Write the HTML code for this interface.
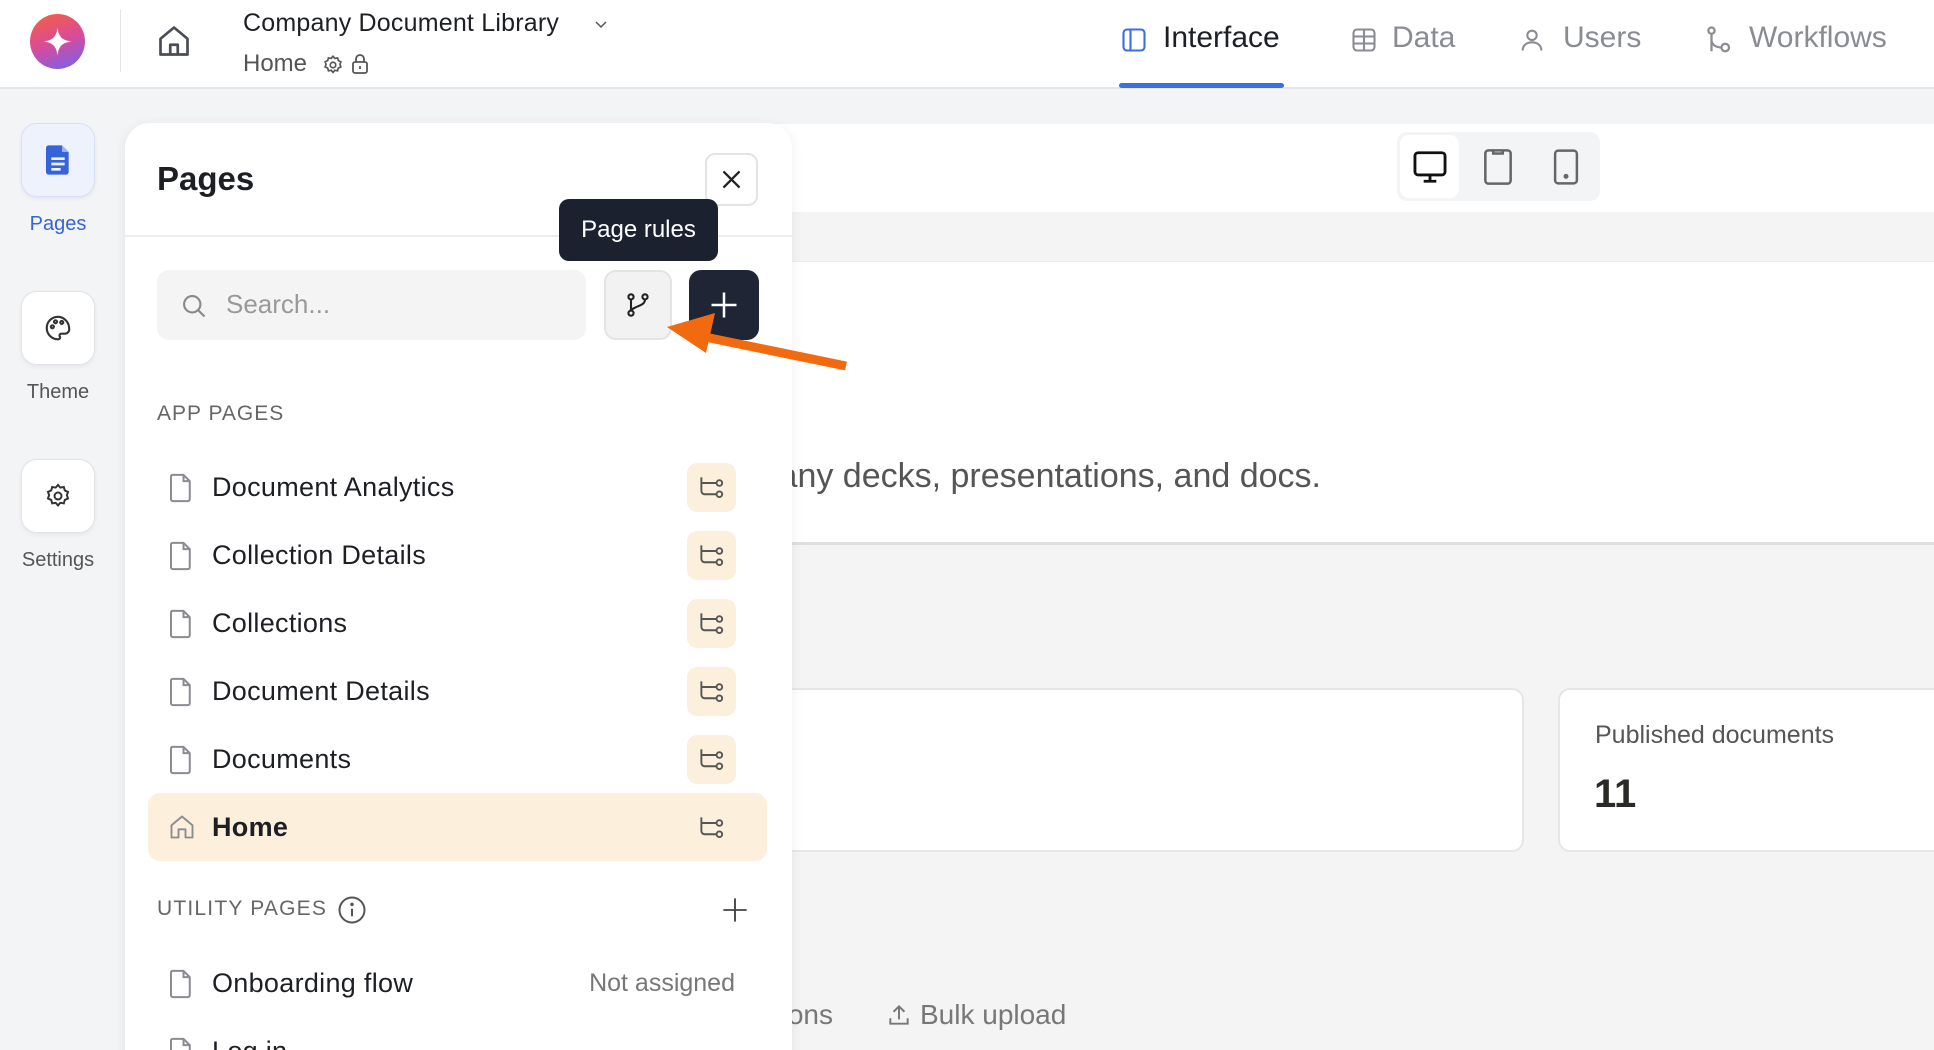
<!DOCTYPE html>
<html style="width:1934px;height:1050px;overflow:hidden"><head><meta charset="utf-8"><style>
*{box-sizing:border-box;margin:0;padding:0}
body{width:1934px;height:1050px;overflow:hidden;background:#f4f4f4;font-family:"Liberation Sans",sans-serif;position:relative;color:#1d1f24}
.a{position:absolute}
.t{position:absolute;white-space:nowrap}
svg{display:block}
.row{position:absolute;left:148px;width:619px;height:68px}
.row .ic{position:absolute;left:20px;top:20px}
.row .lb{position:absolute;left:64px;top:0;line-height:68px;font-size:27px;letter-spacing:0.3px;color:#1d1f24}
.row .bd{position:absolute;left:539px;top:10px;width:49px;height:49px;border-radius:10px;background:#fcefdc}
.row .bd svg{position:absolute;left:11px;top:11px}
.sb{position:absolute;left:21px;width:74px;height:74px;border-radius:16px;background:#fff;border:1px solid #e3e4e8;box-shadow:0 2px 4px rgba(0,0,0,.06)}
.sl{position:absolute;left:0;width:116px;text-align:center;font-size:20px;color:#555}
</style></head><body>
<!-- header -->
<div class="a" style="left:0;top:0;width:1934px;height:89px;background:#fff;border-bottom:2px solid #e6e7ea"></div>
<div class="a" style="left:30px;top:14px;width:55px;height:55px;border-radius:50%;background:linear-gradient(160deg,#f7613a 0%,#d94b9a 50%,#6c63f5 100%)"></div>
<svg class="a" style="left:39px;top:23px" width="37" height="37" viewBox="0 0 24 24"><path d="M12 3C12.8 9 15 11.2 21 12 15 12.8 12.8 15 12 21 11.2 15 9 12.8 3 12 9 11.2 11.2 9 12 3Z" fill="#fff"/></svg>
<div class="a" style="left:120px;top:10px;width:1px;height:62px;background:#e3e4e8"></div>
<svg class="a" style="left:156px;top:22px" width="36" height="38" viewBox="0 0 24 24" fill="none" stroke="#4a4d55" stroke-width="1.8" stroke-linejoin="round"><path d="M3 10.5 12 3l9 7.5V21H3Z"/><path d="M9.5 21v-6.5h5V21"/></svg>
<div class="t" style="left:243px;top:9px;font-size:25px;letter-spacing:0.2px;font-weight:500;color:#1d1f24">Company Document Library</div>
<svg class="a" style="left:593px;top:18px" width="16" height="14" viewBox="0 0 16 14" fill="none" stroke="#555" stroke-width="1.5"><path d="M3 4l5 5 5-5"/></svg>
<div class="t" style="left:243px;top:50px;font-size:24px;color:#555">Home</div>
<svg class="a" style="left:322px;top:54px" width="22" height="22" viewBox="0 0 24 24" fill="none" stroke="#555" stroke-width="1.8"><circle cx="12" cy="12" r="3"/><path d="M12 2.5l2 2.3 3-.5.8 2.9 2.8 1.3-1 2.8 1 2.8-2.8 1.3-.8 2.9-3-.5-2 2.3-2-2.3-3 .5-.8-2.9-2.8-1.3 1-2.8-1-2.8 2.8-1.3.8-2.9 3 .5Z"/></svg>
<svg class="a" style="left:350px;top:53px" width="20" height="22" viewBox="0 0 20 22" fill="none" stroke="#555" stroke-width="1.8"><rect x="3" y="9" width="14" height="11" rx="2"/><path d="M6 9V6a4 4 0 0 1 8 0v3M10 13v3"/></svg>
<!-- tabs -->
<svg class="a" style="left:1120px;top:26px" width="28" height="28" viewBox="0 0 24 24" fill="none" stroke="#3b6fe0" stroke-width="1.8"><rect x="3" y="3" width="18" height="18" rx="3"/><path d="M9 3v18"/></svg>
<div class="t" style="left:1163px;top:21px;font-size:30px;font-weight:500;color:#1d1f24">Interface</div>
<div class="a" style="left:1119px;top:83px;width:165px;height:5px;border-radius:3px;background:#3b6fe0"></div>
<svg class="a" style="left:1350px;top:26px" width="28" height="28" viewBox="0 0 24 24" fill="none" stroke="#8a8c92" stroke-width="1.8"><rect x="3" y="3" width="18" height="18" rx="3"/><path d="M3 9h18M3 15h18M12 3v18"/></svg>
<div class="t" style="left:1392px;top:21px;font-size:30px;color:#8a8c92">Data</div>
<svg class="a" style="left:1518px;top:25px" width="28" height="30" viewBox="0 0 24 24" fill="none" stroke="#8a8c92" stroke-width="1.8"><circle cx="12" cy="8" r="4"/><path d="M4 21c0-4.5 3.5-7 8-7s8 2.5 8 7"/></svg>
<div class="t" style="left:1563px;top:21px;font-size:30px;color:#8a8c92">Users</div>
<svg class="a" style="left:1704px;top:24px" width="30" height="32" viewBox="0 0 24 24" fill="none" stroke="#8a8c92" stroke-width="1.8"><circle cx="6" cy="4.5" r="2.5"/><circle cx="17" cy="18" r="3"/><path d="M6 7v14M6 12c0 4 4 6 8 6"/></svg>
<div class="t" style="left:1749px;top:21px;font-size:30px;color:#8a8c92">Workflows</div>
<!-- grey band + left sidebar -->
<div class="a" style="left:0;top:91px;width:1934px;height:33px;background:#f3f4f6"></div>
<div class="a" style="left:0;top:91px;width:160px;height:959px;background:#f3f4f6"></div>
<div class="sb" style="top:123px;background:#eef2fd;border-color:#d7e0f7"></div>
<svg class="a" style="left:44px;top:144px" width="28" height="32" viewBox="0 0 20 24"><path d="M3 1h10l5 5v15a2 2 0 0 1-2 2H3a2 2 0 0 1-2-2V3a2 2 0 0 1 2-2Z" fill="#3763d8"/><path d="M5 11h10M5 15h10M5 19h7" stroke="#eef2fd" stroke-width="2"/><path d="M13 1v5h5" fill="#9db3ee"/></svg>
<div class="sl" style="top:213px;color:#3763d8">Pages</div>
<div class="sb" style="top:291px"></div>
<svg class="a" style="left:43px;top:313px" width="30" height="30" viewBox="0 0 24 24" fill="none" stroke="#333" stroke-width="1.7"><path d="M12 3a9 9 0 1 0 0 18c1.5 0 2-1 1.5-2s-.5-2.5 1.5-2.5h2.5A3.5 3.5 0 0 0 21 13c0-5.5-4-10-9-10Z"/><circle cx="7.5" cy="11" r="1.2"/><circle cx="10" cy="7" r="1.2"/><circle cx="15" cy="7.5" r="1.2"/></svg>
<div class="sl" style="top:381px">Theme</div>
<div class="sb" style="top:459px"></div>
<svg class="a" style="left:44px;top:482px" width="28" height="28" viewBox="0 0 24 24" fill="none" stroke="#333" stroke-width="1.7"><circle cx="12" cy="12" r="3"/><path d="M12 2.5l2 2.3 3-.5.8 2.9 2.8 1.3-1 2.8 1 2.8-2.8 1.3-.8 2.9-3-.5-2 2.3-2-2.3-3 .5-.8-2.9-2.8-1.3 1-2.8-1-2.8 2.8-1.3.8-2.9 3 .5Z"/></svg>
<div class="sl" style="top:549px">Settings</div>
<!-- main canvas -->
<div class="a" style="left:160px;top:124px;width:1774px;height:88px;background:#fff"></div>
<div class="a" style="left:1397px;top:132px;width:203px;height:69px;border-radius:10px;background:#f3f4f6"></div>
<div class="a" style="left:1400px;top:135px;width:59px;height:63px;border-radius:9px;background:#fff"></div>
<svg class="a" style="left:1411px;top:148px" width="38" height="38" viewBox="0 0 24 24" fill="none" stroke="#111" stroke-width="1.8"><rect x="2.5" y="3" width="19" height="14" rx="2"/><path d="M12 17v4M8 21h8"/></svg>
<svg class="a" style="left:1482px;top:148px" width="32" height="38" viewBox="0 0 20 24" fill="none" stroke="#666" stroke-width="1.6"><rect x="2" y="1.5" width="16" height="21" rx="2"/><path d="M7 1.5v2h6v-2"/></svg>
<svg class="a" style="left:1552px;top:148px" width="28" height="38" viewBox="0 0 18 24" fill="none" stroke="#666" stroke-width="1.6"><rect x="2" y="1.5" width="14" height="21" rx="2"/><circle cx="9" cy="18" r=".8" fill="#666"/></svg>
<div class="a" style="left:160px;top:261px;width:1774px;height:284px;background:#fff;border-bottom:3px solid #dedfe2;border-top:1px solid #ececec"></div>
<div class="t" style="left:200px;top:457px;width:1121px;text-align:right;font-size:34px;color:#555">Browse all company decks, presentations, and docs.</div>
<div class="a" style="left:400px;top:688px;width:1124px;height:164px;background:#fff;border:2px solid #e6e6e6;border-radius:12px"></div>
<div class="a" style="left:1558px;top:688px;width:420px;height:164px;background:#fff;border:2px solid #e6e6e6;border-radius:12px"></div>
<div class="t" style="left:1595px;top:721px;font-size:25px;color:#555">Published documents</div>
<div class="t" style="left:1594px;top:772px;font-size:40px;font-weight:bold;color:#2a2a26">11</div>
<div class="t" style="left:600px;top:999px;width:233px;text-align:right;font-size:28px;color:#777">Actions</div>
<svg class="a" style="left:886px;top:1001px" width="26" height="28" viewBox="0 0 24 24" fill="none" stroke="#777" stroke-width="1.8"><path d="M12 16V4M7 9l5-5 5 5M4 15v5h16v-5"/></svg>
<div class="t" style="left:920px;top:999px;font-size:28px;color:#777">Bulk upload</div>
<!-- pages panel -->
<div class="a" style="left:125px;top:123px;width:667px;height:960px;background:#fff;border-radius:25px;box-shadow:0 2px 12px rgba(0,0,0,.07)"></div>
<div class="t" style="left:157px;top:160px;font-size:33px;font-weight:bold;color:#1d1f24">Pages</div>
<div class="a" style="left:705px;top:153px;width:53px;height:53px;border-radius:10px;border:2px solid #e3e4e8;background:#fff"></div>
<svg class="a" style="left:720px;top:168px" width="23" height="23" viewBox="0 0 20 20" stroke="#222" stroke-width="2"><path d="M3 3l14 14M17 3 3 17"/></svg>
<div class="a" style="left:125px;top:235px;width:667px;height:2px;background:#ececee"></div>
<div class="a" style="left:157px;top:270px;width:429px;height:70px;border-radius:12px;background:#f4f4f5"></div>
<svg class="a" style="left:180px;top:292px" width="28" height="28" viewBox="0 0 24 24" fill="none" stroke="#888" stroke-width="1.8"><circle cx="10.5" cy="10.5" r="7"/><path d="M15.5 15.5 21 21"/></svg>
<div class="t" style="left:226px;top:289px;font-size:26px;color:#999">Search...</div>
<div class="a" style="left:604px;top:270px;width:68px;height:70px;border-radius:12px;background:#f2f2f2;border:2px solid #e4e4e4"></div>
<svg class="a" style="left:624px;top:291px" width="28" height="28" viewBox="0 0 24 24" fill="none" stroke="#222" stroke-width="1.8"><circle cx="6" cy="5" r="2.2"/><circle cx="6" cy="19" r="2.2"/><circle cx="18" cy="5" r="2.2"/><path d="M6 7.2v9.6M18 7.2c0 5-6 5-12 9"/></svg>
<div class="a" style="left:689px;top:270px;width:70px;height:70px;border-radius:12px;background:#1f2535"></div>
<svg class="a" style="left:709px;top:290px" width="30" height="30" viewBox="0 0 24 24" stroke="#fff" stroke-width="2"><path d="M12 2v20M2 12h20"/></svg>
<div class="a" style="left:559px;top:199px;width:159px;height:62px;border-radius:10px;background:#1c2130"></div>
<div class="t" style="left:559px;top:199px;width:159px;line-height:62px;text-align:center;font-size:24px;color:#fff">Page rules</div>
<svg class="a" style="left:660px;top:310px" width="190" height="70" viewBox="660 310 190 70"><path d="M846 366 700 336" stroke="#f26a10" stroke-width="9"/><path d="M667 327 715 313 706 353Z" fill="#f26a10"/></svg>
<div class="t" style="left:157px;top:402px;font-size:21px;font-weight:500;letter-spacing:1px;color:#666">APP PAGES</div>

<div class="row" style="top:453px"><svg class="ic" width="26" height="30" viewBox="0 0 20 24" fill="none" stroke="#8a8c92" stroke-width="1.6"><path d="M3 1.5h9l5 5V21a1.5 1.5 0 0 1-1.5 1.5h-12A1.5 1.5 0 0 1 2 21V3a1.5 1.5 0 0 1 1-1.5ZM12 1.5v5h5"/></svg><div class="lb">Document Analytics</div><div class="bd"><svg width="27" height="27" viewBox="0 0 24 24" fill="none" stroke="#555" stroke-width="1.7"><path d="M3 3v12a3 3 0 0 0 3 3h10M3 8h13"/><circle cx="19" cy="8" r="2.5"/><circle cx="19" cy="18" r="2.5"/></svg></div></div>
<div class="row" style="top:521px"><svg class="ic" width="26" height="30" viewBox="0 0 20 24" fill="none" stroke="#8a8c92" stroke-width="1.6"><path d="M3 1.5h9l5 5V21a1.5 1.5 0 0 1-1.5 1.5h-12A1.5 1.5 0 0 1 2 21V3a1.5 1.5 0 0 1 1-1.5ZM12 1.5v5h5"/></svg><div class="lb">Collection Details</div><div class="bd"><svg width="27" height="27" viewBox="0 0 24 24" fill="none" stroke="#555" stroke-width="1.7"><path d="M3 3v12a3 3 0 0 0 3 3h10M3 8h13"/><circle cx="19" cy="8" r="2.5"/><circle cx="19" cy="18" r="2.5"/></svg></div></div>
<div class="row" style="top:589px"><svg class="ic" width="26" height="30" viewBox="0 0 20 24" fill="none" stroke="#8a8c92" stroke-width="1.6"><path d="M3 1.5h9l5 5V21a1.5 1.5 0 0 1-1.5 1.5h-12A1.5 1.5 0 0 1 2 21V3a1.5 1.5 0 0 1 1-1.5ZM12 1.5v5h5"/></svg><div class="lb">Collections</div><div class="bd"><svg width="27" height="27" viewBox="0 0 24 24" fill="none" stroke="#555" stroke-width="1.7"><path d="M3 3v12a3 3 0 0 0 3 3h10M3 8h13"/><circle cx="19" cy="8" r="2.5"/><circle cx="19" cy="18" r="2.5"/></svg></div></div>
<div class="row" style="top:657px"><svg class="ic" width="26" height="30" viewBox="0 0 20 24" fill="none" stroke="#8a8c92" stroke-width="1.6"><path d="M3 1.5h9l5 5V21a1.5 1.5 0 0 1-1.5 1.5h-12A1.5 1.5 0 0 1 2 21V3a1.5 1.5 0 0 1 1-1.5ZM12 1.5v5h5"/></svg><div class="lb">Document Details</div><div class="bd"><svg width="27" height="27" viewBox="0 0 24 24" fill="none" stroke="#555" stroke-width="1.7"><path d="M3 3v12a3 3 0 0 0 3 3h10M3 8h13"/><circle cx="19" cy="8" r="2.5"/><circle cx="19" cy="18" r="2.5"/></svg></div></div>
<div class="row" style="top:725px"><svg class="ic" width="26" height="30" viewBox="0 0 20 24" fill="none" stroke="#8a8c92" stroke-width="1.6"><path d="M3 1.5h9l5 5V21a1.5 1.5 0 0 1-1.5 1.5h-12A1.5 1.5 0 0 1 2 21V3a1.5 1.5 0 0 1 1-1.5ZM12 1.5v5h5"/></svg><div class="lb">Documents</div><div class="bd"><svg width="27" height="27" viewBox="0 0 24 24" fill="none" stroke="#555" stroke-width="1.7"><path d="M3 3v12a3 3 0 0 0 3 3h10M3 8h13"/><circle cx="19" cy="8" r="2.5"/><circle cx="19" cy="18" r="2.5"/></svg></div></div>
<div class="row" style="top:793px;background:#fcefdc;border-radius:12px"><svg class="ic" style="top:19px" width="28" height="30" viewBox="0 0 24 24" fill="none" stroke="#8a8c92" stroke-width="1.6" stroke-linejoin="round"><path d="M3 10.5 12 3l9 7.5V21h-6v-7H9v7H3Z"/></svg><div class="lb" style="font-weight:bold">Home</div><div class="bd" style="background:transparent"><svg width="27" height="27" viewBox="0 0 24 24" fill="none" stroke="#555" stroke-width="1.7"><path d="M3 3v12a3 3 0 0 0 3 3h10M3 8h13"/><circle cx="19" cy="8" r="2.5"/><circle cx="19" cy="18" r="2.5"/></svg></div></div>

<div class="t" style="left:157px;top:897px;font-size:21px;font-weight:500;letter-spacing:1.2px;color:#666">UTILITY PAGES</div>
<svg class="a" style="left:337px;top:895px" width="30" height="30" viewBox="0 0 24 24" fill="none" stroke="#555" stroke-width="1.6"><circle cx="12" cy="12" r="10"/><path d="M12 11v6"/><circle cx="12" cy="7.5" r=".6" fill="#555"/></svg>
<svg class="a" style="left:721px;top:896px" width="28" height="28" viewBox="0 0 24 24" stroke="#444" stroke-width="1.6"><path d="M12 2v20M2 12h20"/></svg>
<div class="row" style="top:949px"><svg class="ic" width="26" height="30" viewBox="0 0 20 24" fill="none" stroke="#8a8c92" stroke-width="1.6"><path d="M3 1.5h9l5 5V21a1.5 1.5 0 0 1-1.5 1.5h-12A1.5 1.5 0 0 1 2 21V3a1.5 1.5 0 0 1 1-1.5ZM12 1.5v5h5"/></svg><div class="lb">Onboarding flow</div><div class="t" style="right:32px;top:0;line-height:68px;font-size:25px;color:#777">Not assigned</div></div>
<div class="row" style="top:1017px"><svg class="ic" width="26" height="30" viewBox="0 0 20 24" fill="none" stroke="#8a8c92" stroke-width="1.6"><path d="M3 1.5h9l5 5V21a1.5 1.5 0 0 1-1.5 1.5h-12A1.5 1.5 0 0 1 2 21V3a1.5 1.5 0 0 1 1-1.5ZM12 1.5v5h5"/></svg><div class="lb">Log in</div></div>
</body></html>
